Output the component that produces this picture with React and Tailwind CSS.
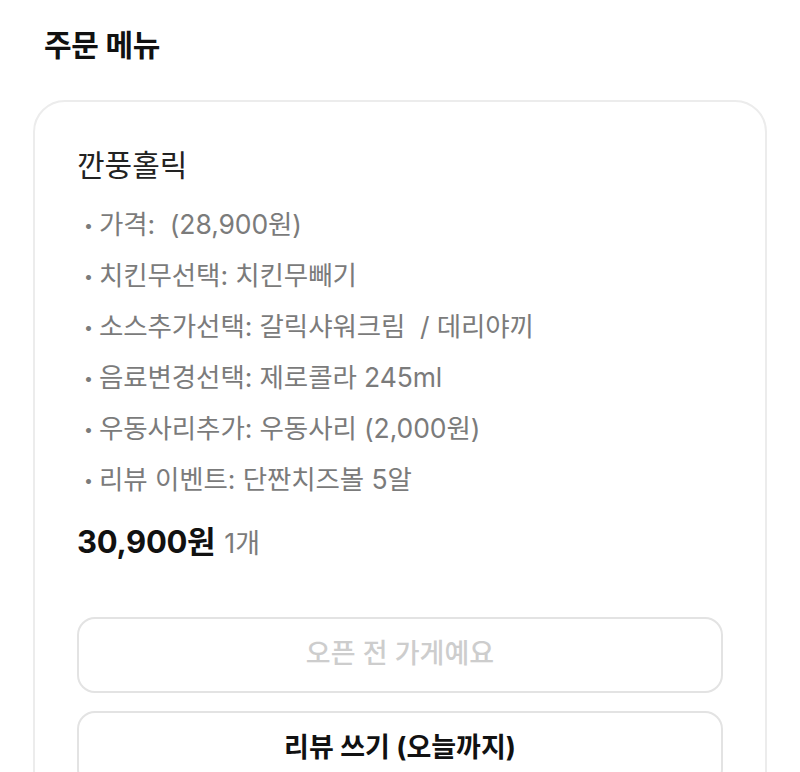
export default function App() {
  const options = [
    '가격:  (28,900원)',
    '치킨무선택: 치킨무빼기',
    '소스추가선택: 갈릭샤워크림  / 데리야끼',
    '음료변경선택: 제로콜라 245ml',
    '우동사리추가: 우동사리 (2,000원)',
    '리뷰 이벤트: 단짠치즈볼 5알',
  ];

  return (
    <div
      className="w-[800px] h-[772px] overflow-hidden bg-white text-[#111]"
      style={{ fontFamily: 'Inter, "Noto Sans CJK KR", "Noto Sans", sans-serif' }}
    >
      <h2 className="pl-[44px] pt-[24px] text-[30px] font-bold leading-[42px] tracking-[-0.3px]">주문 메뉴</h2>

      <section className="mx-[33px] mt-[34px] rounded-[32px] border-2 border-[#ececec] px-[42px] pt-[42px] pb-10">
        <h3 className="text-[30px] leading-[42px] text-[#222]">깐풍홀릭</h3>
        <ul className="mt-[13px] flex flex-col">
          {options.map((o) => (
            <li key={o} className="flex items-center h-[51px] text-[26.5px] text-[#7b7b7b] tracking-[-0.1px]">
              <span className="w-[22px] pl-[7px] text-[16px]">•</span>
              <span className="whitespace-pre">{o}</span>
            </li>
          ))}
        </ul>
        <div className="mt-[14px] flex items-baseline gap-[9px]">
          <span className="text-[31px] font-bold text-[#111] tracking-[-0.3px]">30,900원</span>
          <span className="text-[27px] text-[#7b7b7b]">1개</span>
        </div>

        <div className="mt-[51px] flex flex-col gap-[18px]">
          <button className="h-[76px] rounded-[18px] border-2 border-[#e3e3e3] text-[27px] font-medium text-[#cdcdcd]">
            오픈 전 가게예요
          </button>
          <button className="h-[76px] rounded-[18px] border-2 border-[#e3e3e3] text-[27px] font-bold text-[#111]">
            리뷰 쓰기 (오늘까지)
          </button>
        </div>
      </section>
    </div>
  );
}
